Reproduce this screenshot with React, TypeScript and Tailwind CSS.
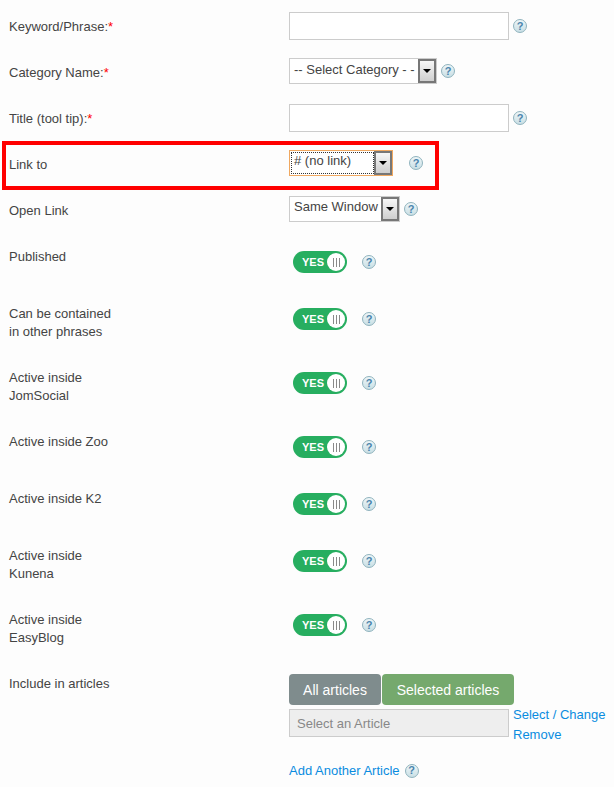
const rows = [
  { label: ['Published'], height: 'h-[57px]' },
  { label: ['Can be contained', 'in other phrases'], height: 'h-[64px]' },
  { label: ['Active inside', 'JomSocial'], height: 'h-[64px]' },
  { label: ['Active inside Zoo'], height: 'h-[57px]' },
  { label: ['Active inside K2'], height: 'h-[57px]' },
  { label: ['Active inside', 'Kunena'], height: 'h-[64px]' },
  { label: ['Active inside', 'EasyBlog'], height: 'h-[64px]' },
]

function Help({ className = '' }: { className?: string }) {
  return (
    <span
      className={`flex h-[14px] w-[14px] shrink-0 items-center justify-center rounded-full border border-[#8fb3bd] bg-gradient-to-b from-[#eef6f8] to-[#c9dfe5] text-[11px] font-bold leading-none text-[#4a84ad] ${className}`}
    >
      ?
    </span>
  )
}

function Arrow() {
  return (
    <span className="flex h-[24px] w-[18px] shrink-0 items-center justify-center border-2 border-[#777] bg-gradient-to-b from-[#f6f6f6] to-[#cfcfcf]">
      <span className="h-0 w-0 border-x-[4px] border-t-[4px] border-x-transparent border-t-black" />
    </span>
  )
}

function Required() {
  return <span className="text-[#f00]">*</span>
}

function Toggle() {
  return (
    <div className="ml-[4px] flex h-[22px] w-[54px] items-center justify-between rounded-full bg-[#27ae60] pl-[9px] pr-[2px]">
      <span className="text-[11px] font-bold text-white">YES</span>
      <span className="flex h-[18px] w-[18px] items-center justify-center gap-[2px] rounded-full bg-white">
        <span className="h-[9px] w-[1px] bg-[#8a8a8a]" />
        <span className="h-[9px] w-[1px] bg-[#8a8a8a]" />
        <span className="h-[9px] w-[1px] bg-[#8a8a8a]" />
      </span>
    </div>
  )
}

function Label({ children }: { children: React.ReactNode }) {
  return <div className="w-[280px] shrink-0 text-[13px] leading-[18px] text-[#444]">{children}</div>
}

export default function App() {
  return (
    <div className="h-[787px] w-[614px] overflow-hidden bg-[#fdfdfd] pl-[9px] pt-[12px] font-['Liberation_Sans',Arial,sans-serif] text-[13px] text-[#444]">
      <div className="flex h-[46px] items-start">
        <div className="w-[280px] shrink-0 pt-[6px] leading-[18px]">
          Keyword/Phrase:<Required />
        </div>
        <div className="h-[28px] w-[220px] border border-[#ccc] bg-white" />
        <Help className="ml-[4px] mt-[7px]" />
      </div>

      <div className="flex h-[46px] items-start">
        <div className="w-[280px] shrink-0 pt-[6px] leading-[18px]">
          Category Name:<Required />
        </div>
        <div className="flex h-[26px] w-[148px] items-start justify-between border border-[#ccc] bg-white pl-[4px]">
          <span className="pt-[2px] leading-[18px]">-- Select Category - -</span>
          <Arrow />
        </div>
        <Help className="ml-[4px] mt-[6px]" />
      </div>

      <div className="flex h-[46px] items-start">
        <div className="w-[280px] shrink-0 pt-[6px] leading-[18px]">
          Title (tool tip):<Required />
        </div>
        <div className="h-[28px] w-[220px] border border-[#ccc] bg-white" />
        <Help className="ml-[4px] mt-[7px]" />
      </div>

      <div className="relative flex h-[46px] items-start">
        <div className="pointer-events-none absolute left-[-7px] top-[-9px] h-[49px] w-[437px] border-4 border-[#f00]" />
        <div className="w-[280px] shrink-0 pt-[6px] leading-[18px]">Link to</div>
        <div className="flex h-[26px] w-[104px] items-start justify-between border border-[#f0a860] bg-white">
          <span className="m-[1px] mr-0 h-[22px] flex-1 border border-dotted border-[#333] pl-[2px] leading-[16px]">
            # (no link)
          </span>
          <Arrow />
        </div>
        <Help className="ml-[16px] mt-[6px]" />
      </div>

      <div className="flex h-[52px] items-start">
        <div className="w-[280px] shrink-0 pt-[6px] leading-[18px]">Open Link</div>
        <div className="flex h-[26px] w-[111px] items-start justify-between border border-[#ccc] bg-white pl-[4px]">
          <span className="pt-[1px] leading-[18px]">Same Window</span>
          <Arrow />
        </div>
        <Help className="ml-[4px] mt-[6px]" />
      </div>

      {rows.map((row) => (
        <div key={row.label.join(' ')} className={`flex items-start ${row.height}`}>
          <Label>
            {row.label.map((line) => (
              <div key={line}>{line}</div>
            ))}
          </Label>
          <div className="flex items-center pt-[3px]">
            <Toggle />
            <Help className="ml-[15px]" />
          </div>
        </div>
      ))}

      <div className="flex items-start">
        <Label>Include in articles</Label>
        <div className="-mt-[1px]">
          <div className="flex gap-[1px]">
            <div className="flex h-[31px] w-[92px] items-center justify-center rounded-[4px] bg-[#7f8c8d] pt-[1px] text-[14px] text-white">
              All articles
            </div>
            <div className="flex h-[31px] w-[132px] items-center justify-center rounded-[4px] bg-[#75a96d] pt-[1px] text-[14px] text-white">
              Selected articles
            </div>
          </div>
          <div className="mt-[4px] flex items-start">
            <div className="flex h-[28px] w-[220px] items-center border border-[#ccc] bg-[#eee] pl-[7px] pt-[1px] text-[#888]">
              Select an Article
            </div>
            <div className="ml-[4px] -mt-[4px] text-[#0a8ce0]">
              <div className="leading-[20px]">Select / Change</div>
              <div className="leading-[20px]">Remove</div>
            </div>
          </div>
          <div className="mt-[16px] flex items-center gap-[5px] text-[#0a8ce0]">
            Add Another Article
            <Help />
          </div>
        </div>
      </div>
    </div>
  )
}
